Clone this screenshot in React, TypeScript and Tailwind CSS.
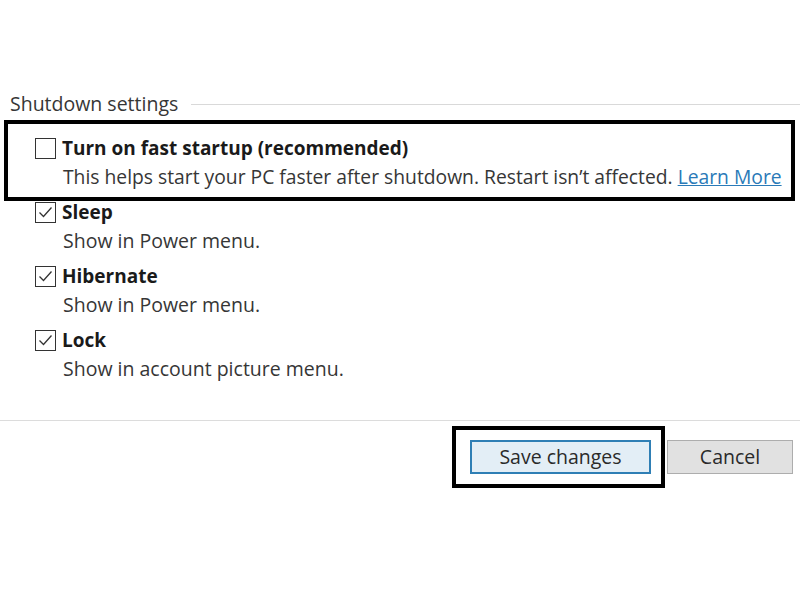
import React from 'react';

const font = { fontFamily: '"Open Sans", "Noto Sans", sans-serif' };

const Box: React.FC<{ checked?: boolean }> = ({ checked }) => (
    <span className="w-[21px] h-[21px] border border-[#333333] bg-white flex items-center justify-center shrink-0">
        {checked && (
            <svg width="17" height="17" viewBox="0 0 17 17" fill="none">
                <path d="M2.5 8.5 L6.5 12.5 L14.5 3.5" stroke="#333333" strokeWidth="1.3" />
            </svg>
        )}
    </span>
);

const Option: React.FC<{ title: string; desc: string; last?: boolean }> = ({ title, desc, last }) => (
    <div className={`pl-[35px] ${last ? '' : 'mb-[13px]'}`}>
        <div className="flex items-center h-[22px] gap-[6px]">
            <Box checked />
            <span className="font-bold text-[#1a1a1a] text-[19px] leading-[22px]">{title}</span>
        </div>
        <div className="mt-[7px] pl-[28px] text-[#363636] text-[19.5px] leading-[22px]">{desc}</div>
    </div>
);

export default function App() {
    return (
        <div className="w-[800px] h-[600px] bg-white overflow-hidden pt-[93px]" style={font}>
            <div className="flex items-center pl-[10px] h-[22px]">
                <span className="text-[19.5px] text-[#363636] leading-[22px]">Shutdown settings</span>
                <div className="flex-1 h-px bg-[#d9d9d9] ml-[13px]" />
            </div>

            <div className="ml-[4px] mr-[5px] mt-[5px] border-4 border-black pt-[13px] pb-[9px] pl-[27px]">
                <div className="flex items-center h-[22px] gap-[6px]">
                    <Box />
                    <span className="font-bold text-[#1a1a1a] text-[19px] leading-[22px]">Turn on fast startup (recommended)</span>
                </div>
                <div className="mt-[7px] pl-[28px] text-[#363636] text-[19.3px] leading-[22px] whitespace-nowrap">
                    This helps start your PC faster after shutdown. Restart isn’t affected.{' '}
                    <span className="text-[#2a7ab8] underline">Learn More</span>
                </div>
            </div>

            <Option title="Sleep" desc="Show in Power menu." />
            <Option title="Hibernate" desc="Show in Power menu." />
            <Option title="Lock" desc="Show in account picture menu." last />

            <div className="mt-[40px] h-px bg-[#dcdcdc]" />

            <div className="flex justify-end items-start pr-[7px] mt-[5px]">
                <div className="border-4 border-black pl-[14px] pr-[10px] py-[10px]">
                    <button className="w-[181px] h-[34px] border-2 border-[#2f7fb5] bg-[#e3eef6] text-[19.5px] text-[#2a2a2a]">
                        Save changes
                    </button>
                </div>
                <button className="ml-[2px] mt-[14px] w-[126px] h-[34px] border border-[#adadad] bg-[#e1e1e1] text-[19.5px] text-[#2a2a2a]">
                    Cancel
                </button>
            </div>
        </div>
    );
}
